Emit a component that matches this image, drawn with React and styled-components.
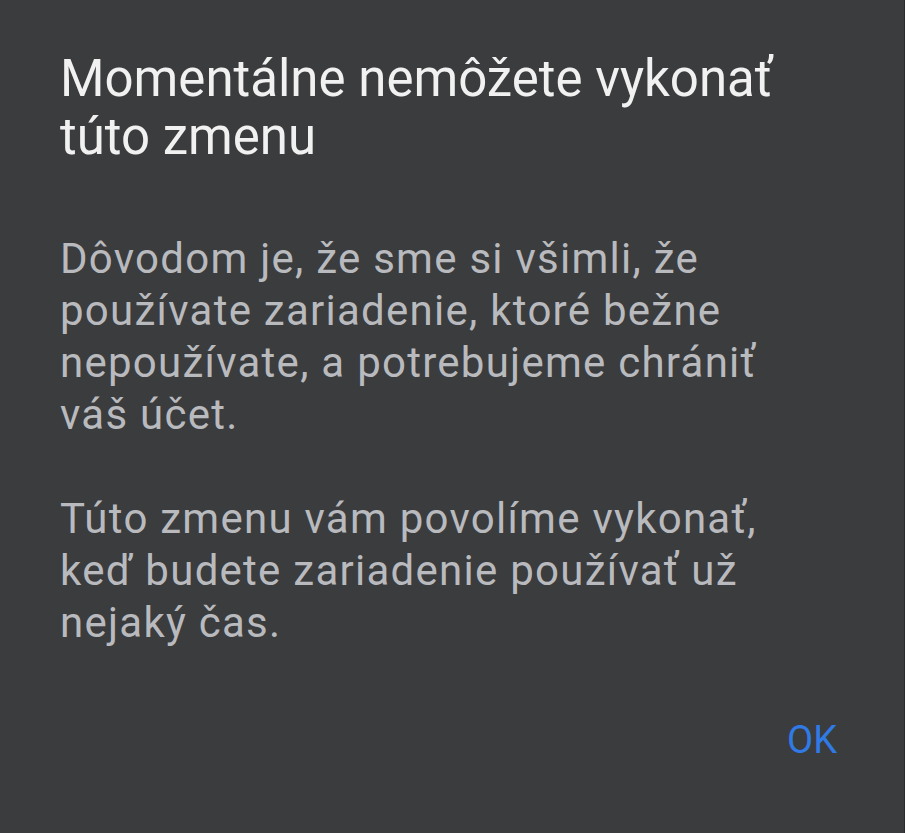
import React from "react";
import styled, { createGlobalStyle } from "styled-components";

const Global = createGlobalStyle`
  html, body { margin: 0; padding: 0; background: #3b3c3e; }
  * { box-sizing: border-box; }
`;

const Dialog = styled.div`
  width: 905px;
  height: 833px;
  background: #3b3c3e;
  padding: 50px 0 0 60px;
  display: flex;
  flex-direction: column;
  font-family: Roboto, "Noto Sans", sans-serif;
  border-right: 1px solid #2a2b2d;
`;

const Title = styled.h1`
  margin: 0;
  font-size: 51px;
  line-height: 58px;
  font-weight: 400;
  color: #f1f1f1;
  max-width: 760px;
`;

const Body = styled.div`
  margin-top: 67px;
  max-width: 740px;
`;

const Paragraph = styled.p`
  margin: 0 0 ${(p) => (p.$last ? 0 : 52)}px 0;
  font-size: 42px;
  line-height: 52px;
  letter-spacing: 0.03em;
  color: #b9babe;
  font-weight: 400;
`;

const Actions = styled.div`
  margin-top: 69px;
  display: flex;
  justify-content: flex-end;
  padding-right: 67px;
`;

const TextButton = styled.button`
  background: none;
  border: none;
  padding: 0;
  font-family: Roboto, "Noto Sans", sans-serif;
  font-size: 38px;
  line-height: 44px;
  font-weight: 400;
  color: #2f7ae5;
  cursor: pointer;
`;

export default function App() {
  return (
    <>
      <Global />
      <Dialog>
        <Title>Momentálne nemôžete vykonať túto zmenu</Title>
        <Body>
          <Paragraph>
            Dôvodom je, že sme si všimli, že používate zariadenie, ktoré bežne
            nepoužívate, a potrebujeme chrániť váš účet.
          </Paragraph>
          <Paragraph $last>
            Túto zmenu vám povolíme vykonať, keď budete zariadenie používať už
            nejaký čas.
          </Paragraph>
        </Body>
        <Actions>
          <TextButton>OK</TextButton>
        </Actions>
      </Dialog>
    </>
  );
}
